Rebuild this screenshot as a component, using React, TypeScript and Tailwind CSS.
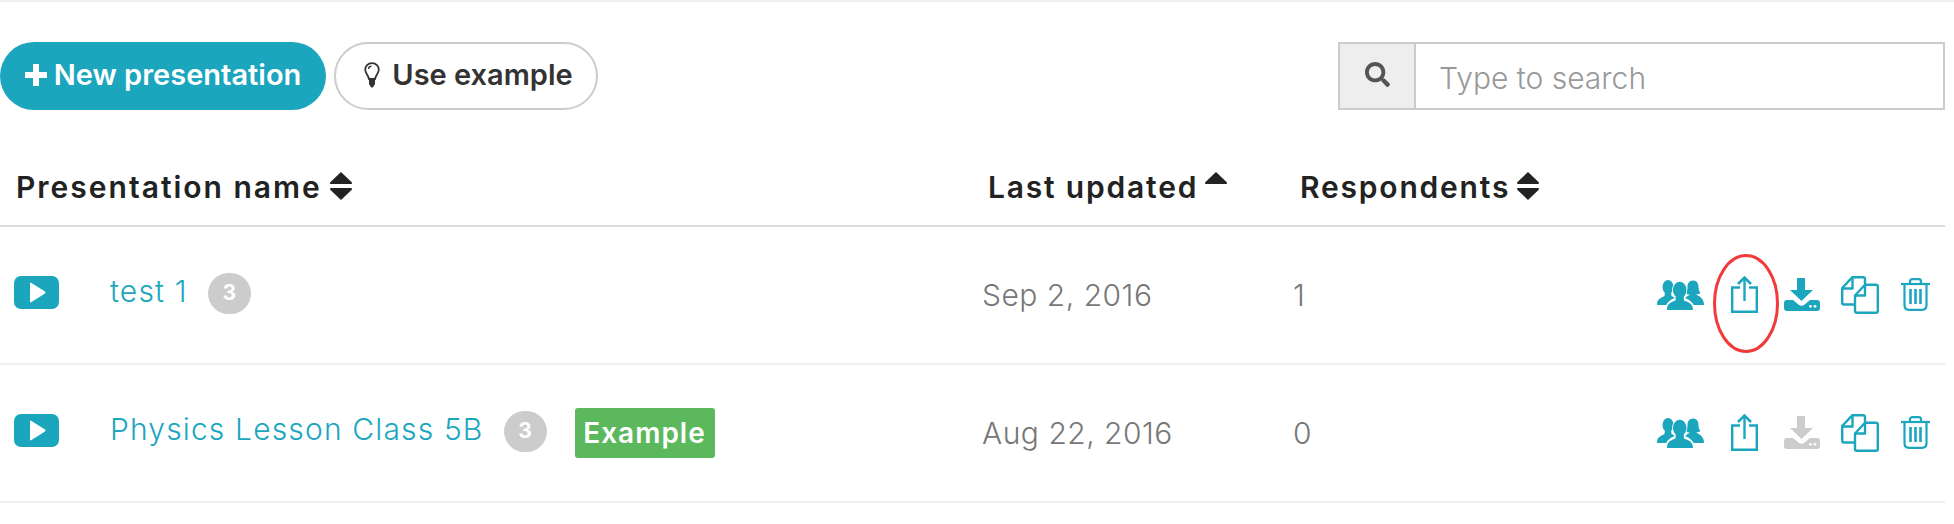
import { FaSearch } from 'react-icons/fa';

// ── Icons ─────────────────────────────────────────────────────────────────────

function SortIcon({ up = true, down = true }: { up?: boolean; down?: boolean }) {
  return (
    <svg viewBox="0 0 24 30" className="w-[24px] h-[30px] shrink-0" fill="#222">
      {up && <path d="M12 1 L22.5 11 Q24 13 21.5 13 H2.5 Q0 13 1.5 11 Z" />}
      {down && <path d="M12 29 L22.5 19 Q24 17 21.5 17 H2.5 Q0 17 1.5 19 Z" />}
    </svg>
  );
}

function PlayIcon() {
  return (
    <svg viewBox="0 0 45 33" className="w-[45px] h-[33px] shrink-0 mb-[2px]">
      <rect width="45" height="33" rx="7" fill="#1ba6be" />
      <path d="M16 7.5 Q16 6 17.5 7 L31 15.5 Q32 16.5 31 17.5 L17.5 26 Q16 27 16 25.5 Z" fill="#fff" />
    </svg>
  );
}

function BulbIcon() {
  return (
    <svg viewBox="0 0 16 26" className="w-[16px] h-[26px] shrink-0">
      <path d="M8 1.2 C3.8 1.2 1.2 4.2 1.2 7.6 C1.2 11.4 4.4 13 5 17 H11 C11.6 13 14.8 11.4 14.8 7.6 C14.8 4.2 12.2 1.2 8 1.2 Z" fill="none" stroke="#333" strokeWidth="1.8" />
      <path d="M4.6 7 C4.6 5.4 6 4.2 7.6 4.2" fill="none" stroke="#333" strokeWidth="1.3" />
      <path d="M5 18 H11 V22 Q11 23 10 23.4 Q9.4 25.6 8 25.6 Q6.6 25.6 6 23.4 Q5 23 5 22 Z" fill="#333" />
    </svg>
  );
}

function PeopleIcon() {
  return (
    <svg viewBox="0 0 47 30" className="w-[47px] h-[30px] shrink-0" fill="#1ba6be">
      <ellipse cx="11" cy="7" rx="5.5" ry="7" />
      <path d="M0 25 C0 20 2 18.5 7.5 16 L8 11 H14 L14.5 16 C19 18 21 20 21 25 Z" />
      <path d="M36 0.5 C40 0.5 41.5 3.5 41.5 7 C41.5 10 42.5 12 43.5 13 C42 14 40.5 14.5 39 14.5 C42.5 16.5 47 18 47 25 H26 C26 19 29 17 33 14.5 C31.5 14.5 29.5 14 28.5 13 C29.5 12 30.5 10 30.5 7 C30.5 3.5 32 0.5 36 0.5 Z" />
      <ellipse cx="22.7" cy="10" rx="7.6" ry="9" fill="#fff" />
      <path d="M8.5 30.5 C8.5 23 11.5 21 17.5 18 H28 C34 21 37.5 23 37.5 30.5 Z" fill="#fff" />
      <ellipse cx="22.7" cy="10" rx="6.8" ry="8.2" />
      <path d="M10 30 C10 24 13 22.5 18.5 20.5 L19 14 H26.5 L27 20.5 C32.5 22.5 36 24 36 30 Z" />
    </svg>
  );
}

function ShareIcon() {
  return (
    <svg viewBox="0 0 27 37" className="w-[27px] h-[37px] shrink-0" fill="none" stroke="#1ba6be" strokeWidth="2.4">
      <path d="M9 11.5 H1.2 V35.8 H25.8 V11.5 H18" />
      <path d="M13.5 25 V2" />
      <path d="M7 8 L13.5 1.6 L20 8" strokeWidth="2.6" />
    </svg>
  );
}

function DownloadIcon({ color }: { color: string }) {
  return (
    <svg viewBox="0 0 36 33" className="w-[36px] h-[33px] shrink-0" fill={color}>
      <path d="M13 0 H21 V12 H29 L17.5 23 L6 12 H13 Z" />
      <path d="M3 22 H9 L15 27 Q17.5 28.5 20 27 L26 22 H33 Q36 22 36 25 V30 Q36 33 33 33 H3 Q0 33 0 30 V25 Q0 22 3 22 Z" />
      <circle cx="26.5" cy="28.3" r="1.4" fill="#fff" />
      <circle cx="31" cy="28.3" r="1.4" fill="#fff" />
    </svg>
  );
}

function CopyIcon() {
  return (
    <svg viewBox="0 0 38 38" className="w-[38px] h-[38px] shrink-0" fill="none" stroke="#1ba6be" strokeWidth="2.4" strokeLinejoin="round">
      <path d="M13 28.5 H3 Q1.2 28.5 1.2 26.5 V12 L11.5 1.2 H22 Q24 1.2 24 3 V8.5" />
      <path d="M2 12.5 H11.5 V2" />
      <path d="M24 8.8 H35 Q36.8 8.8 36.8 10.5 V35 Q36.8 36.8 35 36.8 H16 Q14 36.8 14 35 V19.5 Z" />
      <path d="M14.5 19.5 H24 V9.5" />
    </svg>
  );
}

function TrashIcon() {
  return (
    <svg viewBox="0 0 29 33" className="w-[29px] h-[33px] shrink-0" fill="none" stroke="#1ba6be" strokeWidth="2.2">
      <path d="M0 6 H29" />
      <path d="M9 6 V3.5 Q9 1.2 11.5 1.2 H17.5 Q20 1.2 20 3.5 V6" />
      <path d="M3.5 6 V27 Q3.5 31.8 8 31.8 H21 Q25.5 31.8 25.5 27 V6" />
      <path d="M9.5 11 V26 M14.5 11 V26 M19.5 11 V26" strokeWidth="2.6" />
    </svg>
  );
}

// ── Row ───────────────────────────────────────────────────────────────────────

function Row({ name, date, count, example, downloadable }: {
  name: string; date: string; count: string; example?: boolean; downloadable: boolean;
}) {
  return (
    <div className="grid grid-cols-[982px_311px_1fr] items-center h-[138px] border-b-2 border-[#eeeeee]">
      <div className="flex items-center pl-[14px] pb-[4px]">
        <PlayIcon />
        <a className="ml-[51px] pb-[4px] text-[30px] font-light text-[#1ba6be] tracking-[1.15px]">{name}</a>
        <span className="ml-[20px] w-[43px] h-[41px] rounded-full bg-[#cccccc] text-white text-[21px] font-bold flex items-center justify-center">3</span>
        {example && (
          <span className="ml-[28px] mt-[3px] w-[140px] h-[50px] rounded-[3px] bg-[#5cb85c] text-white text-[28px] font-semibold tracking-[1px] flex items-center justify-center">Example</span>
        )}
      </div>
      <div className="text-[30px] font-light text-[#777777] tracking-[0.5px]">{date}</div>
      <div className="flex items-center justify-between pr-[15px]">
        <span className="text-[30px] font-light text-[#777777]">{count}</span>
        <div className="flex items-center pb-[1px]">
          <PeopleIcon />
          <div className="relative ml-[27px]">
            <ShareIcon />
            {!example && (
              <svg viewBox="0 0 66 99" className="absolute left-[-18px] top-[-22px] w-[66px] h-[99px] max-w-none" fill="none" stroke="#f23a3a" strokeWidth="3">
                <ellipse cx="33" cy="49.5" rx="31.5" ry="48" />
              </svg>
            )}
          </div>
          <div className="ml-[26px]"><DownloadIcon color={downloadable ? '#1ba6be' : '#cccccc'} /></div>
          <div className="ml-[21px]"><CopyIcon /></div>
          <div className="ml-[22px]"><TrashIcon /></div>
        </div>
      </div>
    </div>
  );
}

// ── Main ──────────────────────────────────────────────────────────────────────

export default function App() {
  return (
    <div className="w-[1954px] h-[524px] bg-white border-t-2 border-[#eeeeee] overflow-hidden font-['Inter',sans-serif]">
      <div className="w-[1945px]">

        {/* ── Toolbar ── */}
        <div className="flex items-center justify-between pt-[40px]">
          <div className="flex items-center gap-[8px]">
            <button className="w-[326px] h-[68px] rounded-full bg-[#1ba6be] text-white text-[29px] font-semibold flex items-center justify-center gap-[7px] pb-[2px]">
              <svg viewBox="0 0 22 22" className="w-[22px] h-[22px]" fill="#fff">
                <path d="M8 0 H14 V8 H22 V14 H14 V22 H8 V14 H0 V8 H8 Z" />
              </svg>
              New presentation
            </button>
            <button className="w-[264px] h-[68px] rounded-full border-2 border-[#cccccc] bg-white text-[#333333] text-[29px] font-semibold flex items-center justify-center gap-[12px] pb-[2px] pl-[5px]">
              <BulbIcon />
              Use example
            </button>
          </div>
          <div className="flex w-[607px] h-[68px] border-2 border-[#cccccc]">
            <div className="w-[76px] bg-[#eeeeee] border-r-2 border-[#cccccc] flex items-center justify-center shrink-0 pb-[4px]">
              <FaSearch className="text-[#555555]" size={25} />
            </div>
            <input
              placeholder="Type to search"
              className="flex-1 min-w-0 pl-[23px] pt-[4px] text-[30px] font-light text-[#555555] placeholder:text-[#999999] outline-none"
            />
          </div>
        </div>

        {/* ── Header ── */}
        <div className="grid grid-cols-[982px_311px_1fr] items-center h-[117px] border-b-2 border-[#dddddd] text-[30px] font-semibold text-[#222222] tracking-[1.8px] pt-[36px]">
          <div className="flex items-center gap-[7px] pl-[16px]"><span className="pt-[4px] tracking-[2px]">Presentation name</span> <SortIcon /></div>
          <div className="flex items-center gap-[6px] pl-[6px]"><span className="pt-[4px]">Last updated</span> <SortIcon down={false} /></div>
          <div className="flex items-center gap-[6px] pl-[7px]"><span className="pt-[4px]">Respondents</span> <SortIcon /></div>
        </div>

        <Row name="test 1" date="Sep 2, 2016" count="1" downloadable />
        <Row name="Physics Lesson Class 5B" date="Aug 22, 2016" count="0" example downloadable={false} />
      </div>
    </div>
  );
}
